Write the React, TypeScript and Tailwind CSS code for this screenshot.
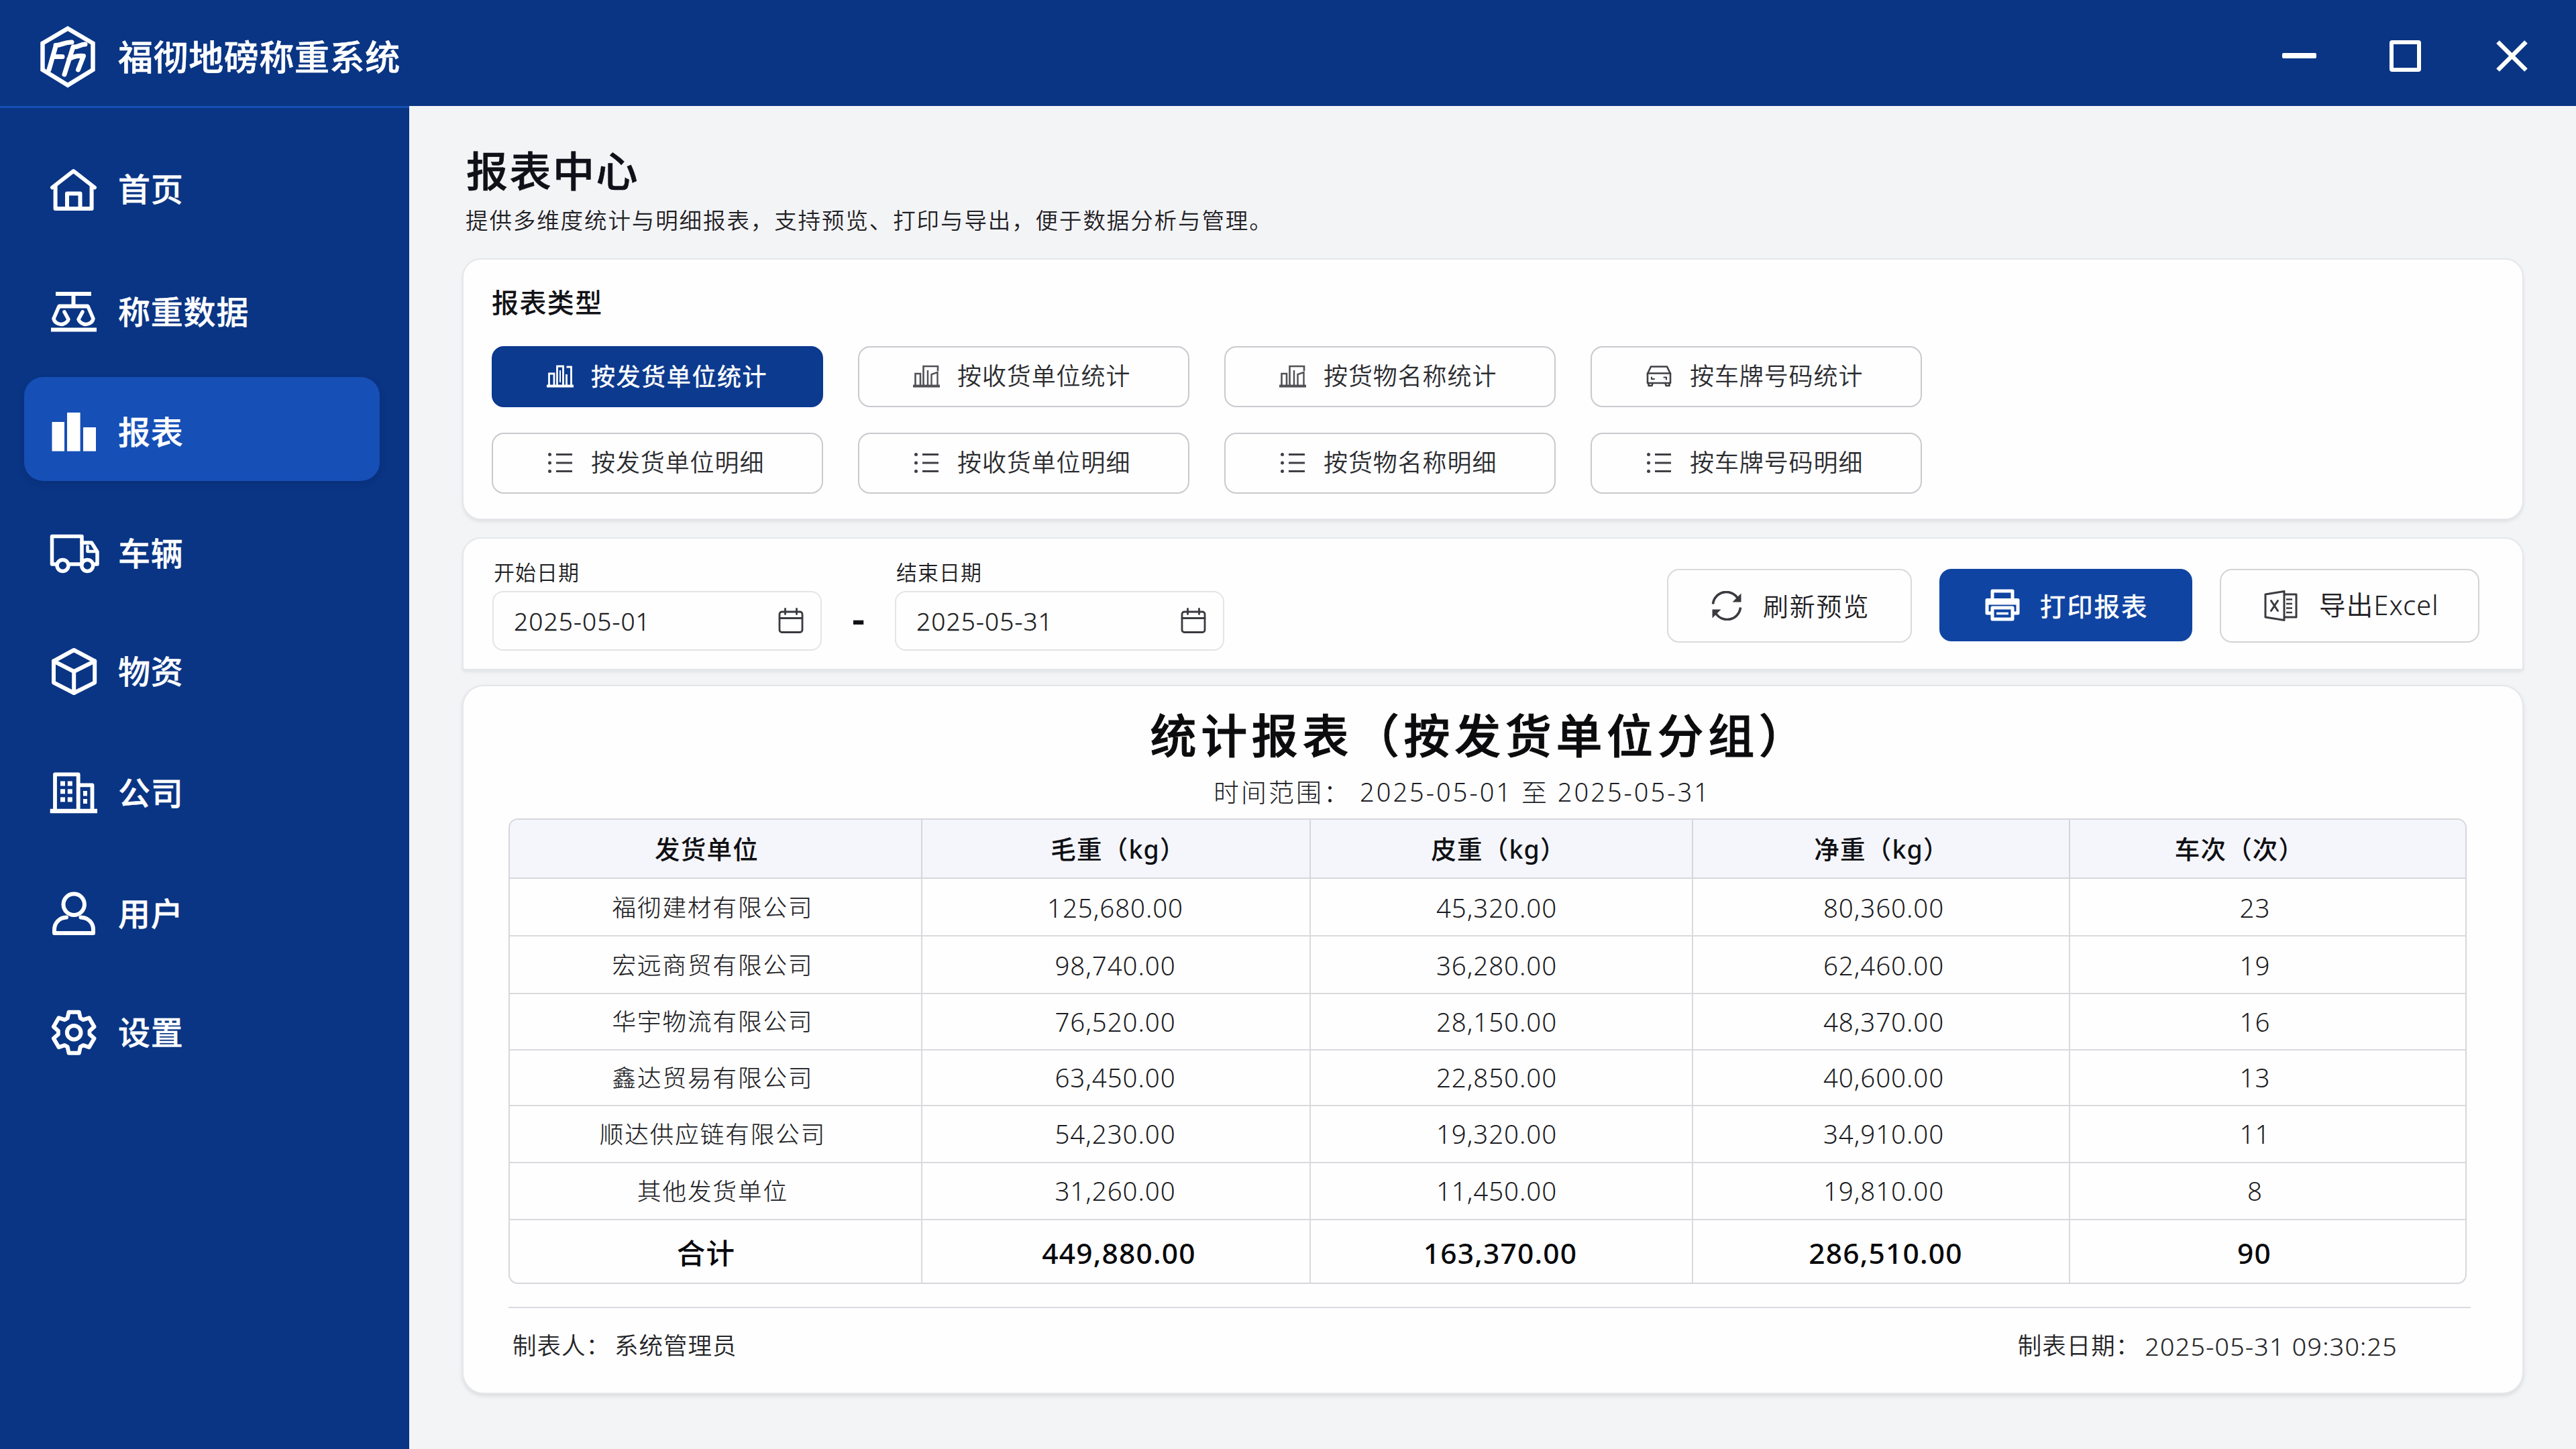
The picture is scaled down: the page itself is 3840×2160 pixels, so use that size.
import React from "react";

const stroke = {
  fill: "none",
  stroke: "currentColor",
  strokeLinejoin: "round" as const,
  strokeLinecap: "round" as const,
};

/* ---------- brand ---------- */

function Logo() {
  return (
    <svg viewBox="0 0 90 96" className="h-[96px] w-[90px]" {...stroke}>
      <path d="M46 6.5 83.5 28.5V68L46 91 8.5 68V28.5Z" strokeWidth="6.5" strokeLinejoin="miter" />
      <path d="M28.5 31.5 18 68M28 31.5C36 32 42 26 52 27M24 48.5H38" strokeWidth="7" />
      <path d="M54 34 41 75M55 34C61 35 66 29.5 72 30M48 52C54 48 63 46.5 69.5 47.5L61.5 68" strokeWidth="7" />
    </svg>
  );
}

/* ---------- sidebar icons, 80 x 80 grid ---------- */

function HomeIcon() {
  return (
    <svg viewBox="0 0 80 80" className="size-20" {...stroke} strokeWidth="6">
      <path d="M8 37.5 39.5 13 71 37.5" />
      <path d="M12.6 35V69H66.6V35" />
      <path d="M30 69V46.5H49.5V69" />
    </svg>
  );
}

function ScaleIcon() {
  return (
    <svg viewBox="0 0 80 80" className="size-20" {...stroke} strokeWidth="5.5">
      <path d="M13 13H66M6 66.6H74" strokeLinecap="butt" strokeWidth="6" />
      <path d="M39.5 13V31.5M18 31.5H61" strokeWidth="6" strokeLinecap="butt" />
      <path d="M18 31.5 10 50C11 55 16 58.5 21 58.5S31 55 32 51L26 40" />
      <path d="M61 31.5 69 50C68 55 63 58.5 58 58.5S48 55 47 51L53 40" />
    </svg>
  );
}

function ReportIcon() {
  return (
    <svg viewBox="0 0 80 80" className="size-20" fill="currentColor">
      <rect x="7.5" y="25" width="18.5" height="43.6" />
      <rect x="30" y="11" width="19.6" height="57.6" />
      <rect x="54" y="33" width="19" height="35.6" />
    </svg>
  );
}

function TruckIcon() {
  return (
    <svg viewBox="0 0 80 80" className="size-20" {...stroke} strokeWidth="5.5">
      <path d="M13 56H7.5V14.5H52V56M34 56H50" />
      <path d="M52 24H66.5L75 37.5V56H71" />
      <path d="M60.5 29.5V37H73" strokeWidth="4.5" />
      <circle cx="23.5" cy="58" r="8.5" />
      <circle cx="60.2" cy="58" r="8.5" />
    </svg>
  );
}

function BoxIcon() {
  return (
    <svg viewBox="0 0 80 80" className="size-20" {...stroke} strokeWidth="6">
      <path d="M40.2 8 71.2 24.5V56.5L40.2 72 10 56.5V24.5Z" />
      <path d="M10 24.5 40.2 40 71.2 24.5M40.2 40V72" />
    </svg>
  );
}

function CompanyIcon() {
  return (
    <svg viewBox="0 0 80 80" className="size-20" {...stroke} strokeWidth="5.8">
      <path d="M12 66V12.4H46.7V66M46.7 28.3H67.5V66" />
      <path d="M4.7 67H75" strokeLinecap="butt" strokeWidth="6.3" />
      <g fill="currentColor" stroke="none">
        <rect x="20" y="22.5" width="7" height="7" />
        <rect x="30.8" y="22.5" width="7" height="7" />
        <rect x="20" y="34.3" width="7" height="7" />
        <rect x="30.8" y="34.3" width="7" height="7" />
        <rect x="20" y="46.4" width="7" height="7" />
        <rect x="30.8" y="46.4" width="7" height="7" />
        <rect x="54" y="37" width="6" height="7.5" />
        <rect x="54" y="49" width="6" height="7" />
      </g>
    </svg>
  );
}

function UserIcon() {
  return (
    <svg viewBox="0 0 80 80" className="size-20" {...stroke} strokeWidth="6">
      <circle cx="40.2" cy="26.3" r="15.7" />
      <path d="M29 45.5C18 46 11 54 11 64V69H69V64C69 54 62 46 50.5 45.5" />
    </svg>
  );
}

const gearPoints = [0, 60, 120, 180, 240, 300]
  .flatMap((tooth) => [
    [tooth - 24, 23.5],
    [tooth - 14, 31.5],
    [tooth + 14, 31.5],
    [tooth + 24, 23.5],
  ])
  .map(([deg, r]) => {
    const a = (deg * Math.PI) / 180;
    return `${(40.2 + r * Math.sin(a)).toFixed(2)},${(40.2 - r * Math.cos(a)).toFixed(2)}`;
  })
  .join(" ");

function GearIcon() {
  return (
    <svg viewBox="0 0 80 80" className="size-20" {...stroke} strokeWidth="6">
      <polygon points={gearPoints} />
      <circle cx="40.2" cy="40.2" r="10.3" />
    </svg>
  );
}

/* ---------- report type icons ---------- */

function ChartIcon() {
  return (
    <svg viewBox="0 0 40 34" className="h-[34px] w-10 text-[#505156]" {...stroke} strokeWidth="2.6" strokeLinecap="butt" strokeLinejoin="miter">
      <path d="M0 31.5H40" strokeWidth="4" />
      <path d="M3.5 31V13H11V31" />
      <path d="M15.5 31V2H37V9" />
      <path d="M22 8V31M27.5 31V14L36.5 11V31" strokeWidth="2.4" />
    </svg>
  );
}

function ActiveChartIcon() {
  return (
    <svg viewBox="0 0 40 34" className="h-[34px] w-10" {...stroke} strokeWidth="2.8" strokeLinecap="butt" strokeLinejoin="miter">
      <path d="M0 31.5H40" strokeWidth="4" />
      <path d="M3.5 31V13H11V31" />
      <path d="M15.5 31V2H24.5V31" />
      <path d="M20 8V26" strokeWidth="2" />
      <path d="M29.5 31V14M29.5 3H36.5V31" />
    </svg>
  );
}

function CarIcon() {
  return (
    <svg viewBox="0 0 40 34" className="h-[34px] w-10 text-[#3f4045]" {...stroke} strokeWidth="2.6">
      <path d="M3 13 8 2.5H32L37 13" />
      <path d="M3 12.5H37V27H3Z" />
      <path d="M4.5 27V31H9.5L10.5 27M35.5 27V31H30.5L29.5 27" />
      <path d="M9 18.5V21H13M31 21.5V18.5H27.5" strokeWidth="2.2" />
    </svg>
  );
}

function ListIcon() {
  return (
    <svg viewBox="0 0 40 34" className="h-[34px] w-10 text-[#3f4045]" fill="currentColor">
      <circle cx="4.5" cy="4.5" r="2.5" />
      <circle cx="4.5" cy="17" r="2.5" />
      <circle cx="4.5" cy="29.5" r="2.5" />
      <rect x="14" y="3" width="24" height="3" />
      <rect x="14" y="15.5" width="24" height="3" />
      <rect x="14" y="28" width="24" height="3" />
    </svg>
  );
}

/* ---------- filter bar icons ---------- */

function CalendarIcon() {
  return (
    <svg viewBox="0 0 38 38" className="size-[38px] text-[#3a3b40]" {...stroke} strokeWidth="2.8">
      <rect x="2" y="6" width="34" height="30.5" rx="3.5" />
      <path d="M2 15.5H36M10.5 1.5V9.5M27.5 1.5V9.5" />
    </svg>
  );
}

function RefreshIcon() {
  return (
    <svg viewBox="0 0 46 44" className="h-11 w-[46px] text-[#3a3b40]" {...stroke} strokeWidth="3.6" strokeLinecap="butt">
      <path d="M2.5 19.5A20 20 0 0 1 40 12" />
      <path d="M43.5 24.5A20 20 0 0 1 6 32" />
      <path d="M44.5 3.5V16.5H31.5Z" fill="currentColor" stroke="none" />
      <path d="M1.5 40.5V27.5H14.5Z" fill="currentColor" stroke="none" />
    </svg>
  );
}

function PrinterIcon() {
  return (
    <svg viewBox="0 0 52 48" className="h-12 w-[52px]" {...stroke} strokeWidth="5" strokeLinejoin="round">
      <path d="M11 14V3H41V14" />
      <path d="M10 36H3V16.5H49V36H42" />
      <path d="M11 28H41V45H11Z" />
      <path d="M17 36.5H35" strokeWidth="3.5" strokeLinecap="butt" />
      <path d="M3 16.5H49V22H3Z" fill="currentColor" strokeWidth="3" />
    </svg>
  );
}

function ExcelIcon() {
  return (
    <svg viewBox="0 0 50 46" className="h-[46px] w-[50px] text-[#3a3b40]" {...stroke} strokeWidth="3">
      <path d="M2 6 30 1.5V44.5L2 40Z" />
      <path d="M31 6H48V40H31" />
      <path d="M10.5 15.5 20.5 30.5M20.5 15.5 10.5 30.5" />
      <path d="M33 13.5H42M33 20H42M33 26.5H42M33 33H42" strokeWidth="2.6" strokeLinecap="butt" />
    </svg>
  );
}

/* ---------- data ---------- */

const navItems = [
  { label: "首页", Icon: HomeIcon, className: "mt-[43px]" },
  { label: "称重数据", Icon: ScaleIcon, className: "mt-7" },
  { label: "报表", Icon: ReportIcon, className: "mt-[20px] bg-[#164fb6] pt-2 shadow-[0_4px_10px_rgba(0,20,80,0.18)]" },
  { label: "车辆", Icon: TruckIcon, className: "mt-[30px]" },
  { label: "物资", Icon: BoxIcon, className: "mt-[21px]" },
  { label: "公司", Icon: CompanyIcon, className: "mt-[26px]" },
  { label: "用户", Icon: UserIcon, className: "mt-[25px]" },
  { label: "设置", Icon: GearIcon, className: "mt-[22px]" },
];

const reportTypes = [
  { label: "按发货单位统计", Icon: ActiveChartIcon, active: true },
  { label: "按收货单位统计", Icon: ChartIcon },
  { label: "按货物名称统计", Icon: ChartIcon },
  { label: "按车牌号码统计", Icon: CarIcon },
  { label: "按发货单位明细", Icon: ListIcon },
  { label: "按收货单位明细", Icon: ListIcon },
  { label: "按货物名称明细", Icon: ListIcon },
  { label: "按车牌号码明细", Icon: ListIcon },
];

const columns = [
  { label: "发货单位", head: "pr-[26px]", cell: "pr-[8px]", total: "pr-[28px]" },
  { label: "毛重（kg）", head: "pl-[7px]", cell: "pr-[2px]", total: "pl-[9px]" },
  { label: "皮重（kg）", head: "pr-[8px]", cell: "pr-[14px]", total: "pr-[3px]" },
  { label: "净重（kg）", head: "pl-[2px]", cell: "pl-[8px]", total: "pl-[14px]" },
  { label: "车次（次）", head: "pr-[84px]", cell: "pr-[38px]", total: "pr-[40px]" },
];

const rows = [
  ["福彻建材有限公司", "125,680.00", "45,320.00", "80,360.00", "23"],
  ["宏远商贸有限公司", "98,740.00", "36,280.00", "62,460.00", "19"],
  ["华宇物流有限公司", "76,520.00", "28,150.00", "48,370.00", "16"],
  ["鑫达贸易有限公司", "63,450.00", "22,850.00", "40,600.00", "13"],
  ["顺达供应链有限公司", "54,230.00", "19,320.00", "34,910.00", "11"],
  ["其他发货单位", "31,260.00", "11,450.00", "19,810.00", "8"],
];

const totals = ["合计", "449,880.00", "163,370.00", "286,510.00", "90"];

/* ---------- sections ---------- */

function TitleBar() {
  return (
    <header className="flex h-[158px] shrink-0 items-center justify-between bg-[#0a3584] pl-[55px] pr-[72px] text-white">
      <div className="flex items-center pt-[12px]">
        <div className="pb-[3px]">
          <Logo />
        </div>
        <h1 className="ml-[31px] text-[52px] font-medium leading-none tracking-[0.6px] [-webkit-text-stroke:0.6px_white]">
          福彻地磅称重系统
        </h1>
      </div>
      <div className="flex items-center pt-[8px]">
        <div className="h-2 w-[51px] rounded-[2px] bg-white" />
        <div className="ml-[109px] size-[47px] rounded-[4px] border-[6.5px] border-white" />
        <svg viewBox="0 0 47 47" className="ml-[112px] size-[47px]" fill="none" stroke="currentColor" strokeWidth="6.5">
          <path d="M2.5 2.5 44.5 44.5M44.5 2.5 2.5 44.5" />
        </svg>
      </div>
    </header>
  );
}

function Sidebar() {
  return (
    <aside className="flex w-[610px] shrink-0 flex-col border-t-[3px] border-[#1450b4] bg-[#0a3584] px-9 text-white">
      {navItems.map(({ label, Icon, className }) => (
        <a key={label} className={`flex h-[155px] w-[530px] items-center rounded-[28px] pl-[34px] ${className}`}>
          <Icon />
          <span className="ml-[26px] text-[48px] font-medium leading-none tracking-[0.8px] [-webkit-text-stroke:0.4px_white]">
            {label}
          </span>
        </a>
      ))}
    </aside>
  );
}

function ReportTypes() {
  return (
    <section className="mt-[39px] h-[390px] rounded-[28px] border-2 border-[#e6e7ea] bg-[#fefefe] pl-[42px] pt-[44px] shadow-[0_3px_5px_rgba(0,0,0,0.08)]">
      <h3 className="text-[40px] font-medium leading-none tracking-[1.4px] text-[#111216]">报表类型</h3>
      <div className="mt-[45px] grid grid-cols-[repeat(4,494px)] gap-x-[52px] gap-y-[38px]">
        {reportTypes.map(({ label, Icon, active }) => (
          <button
            key={label}
            className={
              active
                ? "flex h-[91px] items-center rounded-[18px] border-2 border-[#0b3791] bg-[#0c3a8f] pl-[80px] text-white"
                : "flex h-[91px] items-center rounded-[18px] border-2 border-[#c9cace] bg-[#fefefe] pl-[80px] text-[#2b2c30]"
            }
          >
            <Icon />
            <span
              className={
                active
                  ? "ml-[26px] pt-[1px] text-[36px] leading-none tracking-[1.6px] [-webkit-text-stroke:0.5px_white]"
                  : "ml-[26px] text-[36px] font-[350] leading-none tracking-[0.9px]"
              }
            >
              {label}
            </span>
          </button>
        ))}
      </div>
    </section>
  );
}

function DateField({ label, value }: { label: string; value: string }) {
  return (
    <div className="w-[491px]">
      <div className="pl-[2px] text-[31px] font-[350] leading-none tracking-[1px] text-[#1e1f23]">{label}</div>
      <div className="mt-[12px] flex h-[89px] items-center justify-between rounded-[16px] border-2 border-[#e3e4e8] pl-[30px] pr-[25px] text-[#1d1e22]">
        <span className="text-[37px] font-[350] leading-none tracking-[1.1px] [-webkit-text-stroke:0.3px_#1d1e22]">
          {value}
        </span>
        <CalendarIcon />
      </div>
    </div>
  );
}

function FilterBar() {
  return (
    <section className="mt-[26px] flex h-[198px] items-start justify-between rounded-b-[4px] rounded-t-[28px] border-2 border-[#e6e7ea] bg-[#fefefe] pl-[43px] pr-[64px] shadow-[0_3px_5px_rgba(0,0,0,0.07)]">
      <div className="flex pt-[35px]">
        <DateField label="开始日期" value="2025-05-01" />
        <div className="mt-[53px] w-[109px] text-center text-[60px] font-semibold leading-none text-[#111216]">-</div>
        <DateField label="结束日期" value="2025-05-31" />
      </div>
      <div className="flex gap-[41px] pt-[45px] text-[38px] leading-none text-[#1f2024]">
        <button className="flex h-[110px] w-[365px] items-center rounded-[18px] border-2 border-[#d9dadd] pl-[64px] font-[350] tracking-[1.8px]">
          <RefreshIcon />
          <span className="ml-[31px] pt-[1px]">刷新预览</span>
        </button>
        <button className="flex h-[108px] w-[377px] items-center rounded-[18px] bg-[#1044a2] pl-[68px] tracking-[2.4px] text-white">
          <PrinterIcon />
          <span className="ml-[30px] pt-[2px] [-webkit-text-stroke:0.7px_white]">打印报表</span>
        </button>
        <button className="flex h-[110px] w-[387px] items-center rounded-[18px] border-2 border-[#d3d4d8] pl-[64px] font-[350] tracking-[1.3px]">
          <ExcelIcon />
          <span className="ml-[32px] pt-[1px] text-[39.5px] [-webkit-text-stroke:0.2px_#1f2024]">导出Excel</span>
        </button>
      </div>
    </section>
  );
}

function ReportTable() {
  return (
    <div className="grid w-[2919px] grid-cols-[615px_579px_570px_562px_589px] grid-rows-[88px_86px_86px_84px_83px_85px_85px_93px] overflow-hidden rounded-[14px] border-2 border-[#d6d7dc] bg-[#fefefe] text-[#1b1c23]">
      {columns.map((c, i) => (
        <div
          key={c.label}
          className={`flex items-center justify-center border-b-2 border-[#d6d7dc] bg-[#f5f6fb] pt-[2px] text-[37.5px] font-medium leading-none tracking-[1.2px] text-[#0f1014] ${i < 4 ? "border-r-2" : ""} ${c.head}`}
        >
          {c.label}
        </div>
      ))}
      {rows.flatMap((row, r) =>
        row.map((value, i) => (
          <div
            key={`${r}-${i}`}
            className={`flex items-center justify-center border-b-2 border-[#d9dade] leading-none ${r < 2 ? "pt-[3px]" : "pt-[1px]"} ${i === 0 ? "text-[35.5px] font-light tracking-[2px] [-webkit-text-stroke:0.2px_#1b1c23]" : "text-[38.5px] font-light tracking-[0.9px]"} ${i < 4 ? "border-r-2" : ""} ${columns[i].cell}`}
          >
            {value}
          </div>
        )),
      )}
      {totals.map((value, i) => (
        <div
          key={value}
          className={`flex items-center justify-center border-[#d9dade] pt-[6px] text-[42.5px] font-medium leading-none tracking-[1.2px] text-[#08090c] ${i < 4 ? "border-r-2" : ""} ${columns[i].total}`}
        >
          {value}
        </div>
      ))}
    </div>
  );
}

function ReportPreview() {
  return (
    <section className="mt-[22px] flex h-[1057px] flex-col rounded-[32px] border-2 border-[#e6e7ea] bg-[#fefefe] pl-[67px] shadow-[0_3px_6px_rgba(0,0,0,0.1)]">
      <h2 className="mt-[39px] pr-[106px] text-center text-[69px] font-medium leading-none tracking-[6.6px] text-[#0c0c0e] [-webkit-text-stroke:1px_#0c0c0e]">
        统计报表（按发货单位分组）
      </h2>
      <p className="mt-[30px] pr-[159px] text-center text-[38px] font-light leading-none tracking-[3px] text-[#1b1c23]">
        时间范围： 2025-05-01 至 2025-05-31
      </p>
      <div className="mt-[21px]">
        <ReportTable />
      </div>
      <div className="mt-[34px] h-[2px] w-[2925px] bg-[#dadbe0]" />
      <footer className="mt-[38px] flex w-[2816px] justify-between pl-[6px] text-[35.5px] font-[350] leading-none tracking-[1px] text-[#242529]">
        <div className="flex gap-[6px]">
          <span>制表人：</span>
          <span>系统管理员</span>
        </div>
        <div className="flex gap-[7px]">
          <span>制表日期：</span>
          <span className="text-[37.5px] tracking-[1.3px] [-webkit-text-stroke:0.2px_#242529]">2025-05-31 09:30:25</span>
        </div>
      </footer>
    </section>
  );
}

export default function App() {
  return (
    <div className="flex h-[2160px] w-[3840px] flex-col overflow-hidden bg-[#f3f4f6] font-['Noto_Sans','Noto_Sans_CJK_SC',sans-serif]">
      <TitleBar />
      <div className="flex min-h-0 flex-1">
        <Sidebar />
        <main className="w-[3152px] pl-[79px] pt-[66px]">
          <h2 className="pl-[6px] text-[62px] font-medium leading-none tracking-[2.5px] text-[#101118] [-webkit-text-stroke:0.7px_#101118]">
            报表中心
          </h2>
          <p className="mt-[26px] pl-[5px] text-[33.5px] font-[350] leading-none tracking-[1.9px] text-[#1f2024]">
            提供多维度统计与明细报表，支持预览、打印与导出，便于数据分析与管理。
          </p>
          <ReportTypes />
          <FilterBar />
          <ReportPreview />
        </main>
      </div>
    </div>
  );
}
